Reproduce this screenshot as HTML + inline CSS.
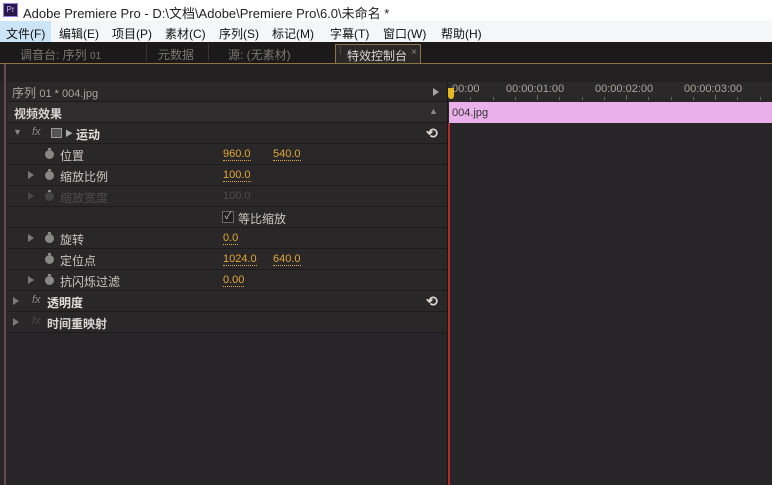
<!DOCTYPE html>
<html><head><meta charset="utf-8"><style>
*{margin:0;padding:0;box-sizing:border-box}
body{width:772px;height:485px;overflow:hidden;background:#282528;font-family:"Liberation Sans","Microsoft YaHei","Noto Sans CJK SC",sans-serif;position:relative}
.a{position:absolute;white-space:nowrap}
#title{left:0;top:0;width:772px;height:21px;background:#fff;font-size:13px;color:#222}
#menu{left:0;top:21px;width:772px;height:21px;background:#f5f6f7;font-size:12px;color:#111}
#tabs{left:0;top:42px;width:772px;height:21px;background:#1b1919;font-size:12px;color:#7a7774}
.row{position:absolute;left:8px;width:439px;height:21px;border-bottom:1px solid #1d1b1c;font-size:12px;color:#c9c6c3;background:#2a2729}
.val{position:absolute;color:#e0a838;font-size:11px;border-bottom:1px dotted #e0a838;line-height:12px;top:4px}
.sw{position:absolute;left:37px;top:6px;width:9px;height:9px;border-radius:50%;background:#8a8787}
.sw:before{content:"";position:absolute;left:3px;top:-2px;width:3px;height:2px;background:#8a8787}
.tri{position:absolute;width:0;height:0;border-top:4px solid transparent;border-bottom:4px solid transparent;border-left:6px solid #7b7878}
.lab{position:absolute;left:52px;top:3px}
.rst{position:absolute;left:418px;top:2px;color:#d8d5d2;font-size:14px;font-weight:bold}
.tk{position:absolute;top:15px;width:1px;height:3px;background:#6a6767}
</style></head><body>
<div class="a" id="title"><span class="a" style="left:3px;top:3px;width:15px;height:14px;background:#2a1a4a;border:1px solid #9a7de0;color:#c9b5ff;font-size:8px;line-height:12px;text-align:center">Pr</span><span class="a" style="left:23px;top:3px">Adobe Premiere Pro - D:\文档\Adobe\Premiere Pro\6.0\未命名 *</span></div>
<div class="a" id="menu"><span class="a" style="left:0;top:0;width:51px;height:21px;background:#cce4f7"></span>
<span class="a" style="left:6px;top:4px">文件(F)</span><span class="a" style="left:59px;top:4px">编辑(E)</span><span class="a" style="left:112px;top:4px">项目(P)</span><span class="a" style="left:165px;top:4px">素材(C)</span><span class="a" style="left:219px;top:4px">序列(S)</span><span class="a" style="left:272px;top:4px">标记(M)</span><span class="a" style="left:330px;top:4px">字幕(T)</span><span class="a" style="left:383px;top:4px">窗口(W)</span><span class="a" style="left:441px;top:4px">帮助(H)</span></div>
<div class="a" id="tabs">
<span class="a" style="left:20px;top:4px">调音台: 序列 <span style="font-size:10px">01</span></span>
<span class="a" style="left:146px;top:2px;width:1px;height:17px;background:#383433"></span>
<span class="a" style="left:158px;top:4px">元数据</span>
<span class="a" style="left:208px;top:2px;width:1px;height:17px;background:#383433"></span>
<span class="a" style="left:228px;top:4px">源: (无素材)</span>
<span class="a" style="left:335px;top:2px;width:86px;height:20px;background:#2b2827;border:1px solid #8a7448;border-bottom:none;color:#d8d5d2"><span class="a" style="left:3px;top:1px;color:#666;font-size:10px">⁞</span><span class="a" style="left:11px;top:2px">特效控制台</span><span class="a" style="left:75px;top:2px;font-size:10px;color:#888">×</span></span>
</div>
<div class="a" style="left:0;top:63px;width:772px;height:1px;background:#8a7448"></div>
<div class="a" style="left:0;top:64px;width:772px;height:18px;background:#232021"></div>
<div class="a" style="left:4px;top:64px;width:2px;height:421px;background:#6a4a4e"></div>
<div class="row" style="top:82px;height:20px;background:#2b2829;color:#a8a5a2"><span class="a" style="left:4px;top:2px">序列 <span style="font-size:11px">01 * 004.jpg</span></span><div class="tri" style="left:425px;top:6px;border-left-color:#a8a5a2"></div></div>
<div class="row" style="top:102px;background:#2f2c2d"><span class="lab" style="left:6px;font-weight:bold;color:#d8d5d2">视频效果</span><span class="a" style="left:421px;top:4px;color:#888;font-size:9px">▲</span></div>
<div class="row" style="top:123px"><span class="a" style="left:5px;top:4px;color:#888;font-size:9px">▼</span><span class="a" style="left:24px;top:3px;color:#888;font-style:italic;font-size:11px">fx</span><span class="a" style="left:43px;top:5px;width:11px;height:10px;border:1px solid #999;background:#555"></span><span class="a" style="left:57px;top:5px;font-size:8px;color:#aaa">▶</span><span class="lab" style="left:68px;font-weight:bold;color:#e0ddda">运动</span><span class="rst">⟲</span></div>
<div class="row" style="top:144px"><div class="sw"></div><span class="lab">位置</span><span class="val" style="left:215px">960.0</span><span class="val" style="left:265px">540.0</span></div>
<div class="row" style="top:165px"><div class="tri" style="left:20px;top:6px"></div><div class="sw"></div><span class="lab">缩放比例</span><span class="val" style="left:215px">100.0</span></div>
<div class="row" style="top:186px;color:#4e4b4b"><div class="tri" style="left:20px;top:6px;border-left-color:#4a4747"></div><div class="sw" style="background:#444"></div><span class="lab">缩放宽度</span><span class="val" style="left:215px;color:#4e4b4b;border:none">100.0</span></div>
<div class="row" style="top:207px"><span class="a" style="left:214px;top:4px;width:12px;height:12px;border:1px solid #666;background:#1e1c1c;color:#ccc;font-size:10px;line-height:10px;text-align:center">✓</span><span class="a" style="left:230px;top:3px">等比缩放</span></div>
<div class="row" style="top:228px"><div class="tri" style="left:20px;top:6px"></div><div class="sw"></div><span class="lab">旋转</span><span class="val" style="left:215px">0.0</span></div>
<div class="row" style="top:249px"><div class="sw"></div><span class="lab">定位点</span><span class="val" style="left:215px">1024.0</span><span class="val" style="left:265px">640.0</span></div>
<div class="row" style="top:270px"><div class="tri" style="left:20px;top:6px"></div><div class="sw"></div><span class="lab">抗闪烁过滤</span><span class="val" style="left:215px">0.00</span></div>
<div class="row" style="top:291px"><div class="tri" style="left:5px;top:6px"></div><span class="a" style="left:24px;top:3px;color:#888;font-style:italic;font-size:11px">fx</span><span class="lab" style="left:39px;font-weight:bold;color:#e0ddda">透明度</span><span class="rst">⟲</span></div>
<div class="row" style="top:312px"><div class="tri" style="left:5px;top:6px"></div><span class="a" style="left:24px;top:3px;color:#4a4747;font-style:italic;font-size:11px">fx</span><span class="lab" style="left:39px;font-weight:bold;color:#d8d5d2">时间重映射</span></div>
<div class="a" style="left:447px;top:82px;width:1px;height:403px;background:#1a1818"></div>
<div class="a" style="left:448px;top:82px;width:324px;height:20px;background:#2b2829;font-size:11px;color:#a8a5a2">
<span class="a" style="left:4px;top:1px">00:00</span><span class="a" style="left:58px;top:1px">00:00:01:00</span><span class="a" style="left:147px;top:1px">00:00:02:00</span><span class="a" style="left:236px;top:1px">00:00:03:00</span>
<span class="tk" style="left:22px"></span><span class="tk" style="left:45px"></span><span class="tk" style="left:67px"></span><span class="tk" style="left:89px;height:5px;top:13px"></span><span class="tk" style="left:111px"></span><span class="tk" style="left:134px"></span><span class="tk" style="left:156px"></span><span class="tk" style="left:178px;height:5px;top:13px"></span><span class="tk" style="left:200px"></span><span class="tk" style="left:223px"></span><span class="tk" style="left:245px"></span><span class="tk" style="left:267px;height:5px;top:13px"></span><span class="tk" style="left:289px"></span><span class="tk" style="left:312px"></span>
<span class="a" style="left:0;top:6px;width:6px;height:11px;background:#e8b820;border-radius:0 0 3px 3px"></span></div>
<div class="a" style="left:449px;top:102px;width:323px;height:21px;background:#eab0ea;color:#333;font-size:11px;padding:5px 0 0 3px">004.jpg</div>
<div class="a" style="left:448px;top:123px;width:2px;height:362px;background:#b02c2a"></div>
</body></html>
